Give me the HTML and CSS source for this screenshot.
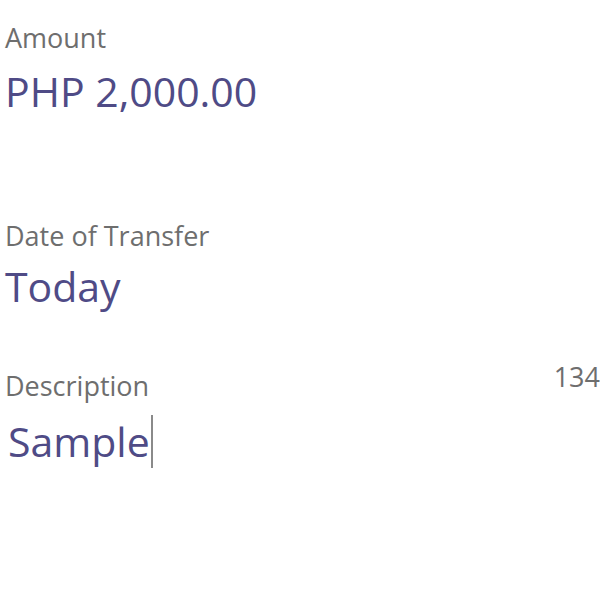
FILE: index.html
```html
<!DOCTYPE html>
<html>
<head>
<meta charset="utf-8">
<link rel="stylesheet" href="styles.css">
</head>
<body>
<div class="form">
  <div class="field amount">
    <div class="label">Amount</div>
    <div class="value">PHP 2,000.00</div>
  </div>
  <div class="field date">
    <div class="label">Date of Transfer</div>
    <div class="value">Today</div>
  </div>
  <div class="field desc">
    <div class="label-row">
      <div class="label">Description</div>
      <div class="counter">134</div>
    </div>
    <div class="value"><span class="text">Sample</span><span class="caret"></span></div>
  </div>
</div>
</body>
</html>
```
FILE: styles.css
```css
html, body {
  margin: 0;
  padding: 0;
  background: #ffffff;
}
body {
  font-family: "Open Sans", "Noto Sans", sans-serif;
  width: 600px;
  height: 600px;
  overflow: hidden;
}
.form {
  display: flex;
  flex-direction: column;
  padding: 21px 0 0 5px;
}
.label {
  color: #6e6e6e;
  font-size: 27px;
  line-height: 34px;
}
.value {
  color: #4f4b86;
  font-size: 41px;
  line-height: 54px;
}
.amount .value { margin-top: 9px; }
.date { margin-top: 101px; }
.date .value { margin-top: 6px; }
.desc { margin-top: 56px; }
.desc .value { margin-top: 11px; }
.label-row {
  display: flex;
  justify-content: space-between;
  align-items: flex-start;
}
.counter {
  color: #6e6e6e;
  font-size: 27px;
  line-height: 34px;
  margin-top: -9px;
}
.desc .value {
  display: flex;
  align-items: center;
  padding-left: 3px;
}
.caret {
  display: inline-block;
  width: 2px;
  height: 53px;
  background: #8a8a8a;
  margin-left: 1px;
}
```
